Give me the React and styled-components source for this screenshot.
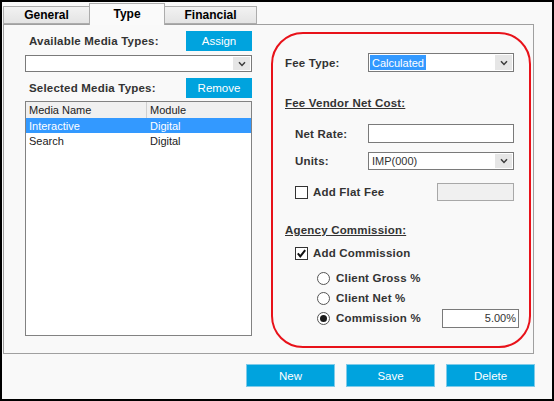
import React from "react";
import styled, { createGlobalStyle } from "styled-components";

const GlobalStyle = createGlobalStyle`
  html, body {
    margin: 0;
    padding: 0;
    background: #fff;
  }
  body {
    font-family: "Liberation Sans", Arial, sans-serif;
  }
  * {
    box-sizing: border-box;
  }
`;

const Frame = styled.div`
  width: 554px;
  height: 401px;
  border: 2px solid #000;
  background: #f9f9f9;
  display: flex;
  flex-direction: column;
`;

const TabBar = styled.div`
  display: flex;
  align-items: flex-end;
  height: 22px;
  padding-left: 1px;
`;

const Tab = styled.div`
  position: relative;
  z-index: ${p => (p.$active ? 1 : 0)};
  width: ${p => p.$w}px;
  height: ${p => (p.$active ? 22 : 18)}px;
  margin-left: ${p => (p.$first ? 0 : -1)}px;
  margin-bottom: ${p => (p.$active ? -1 : 0)}px;
  border: 1px solid #acacac;
  border-bottom: ${p => (p.$active ? "none" : "1px solid #acacac")};
  background: ${p => (p.$active ? "#fafafa" : "linear-gradient(#f2f2f2, #e4e4e4)")};
  display: flex;
  align-items: center;
  justify-content: center;
  padding-bottom: ${p => (p.$active ? 2 : 0)}px;
  font-weight: bold;
  font-size: 12px;
  color: #000;
`;

const Panel = styled.div`
  margin-left: 1px;
  width: 531px;
  height: 330px;
  border: 1px solid #a0a0a0;
  display: flex;
  align-items: flex-start;
  padding: 6px 0 0 21px;
`;

const LeftCol = styled.div`
  width: 227px;
  display: flex;
  flex-direction: column;
`;

const HeaderRow = styled.div`
  display: flex;
  justify-content: space-between;
  align-items: center;
  height: 20px;
  margin-top: ${p => p.$top || 0}px;
`;

const GroupLabel = styled.span`
  padding-left: 4px;
  font-weight: bold;
  font-size: 11.5px;
  letter-spacing: 0.2px;
  color: #333;
`;

const BlueButton = styled.button`
  width: ${p => p.$w}px;
  height: ${p => p.$h}px;
  background: #00a3de;
  border: 1px solid ${p => (p.$outlined ? "#7fcbe9" : "#00a3de")};
  color: #fff;
  font-family: "Liberation Sans", Arial, sans-serif;
  font-size: 11.5px;
  padding: 0;
  cursor: pointer;
`;

const Combo = styled.div`
  display: flex;
  justify-content: space-between;
  align-items: stretch;
  width: ${p => p.$w}px;
  height: ${p => p.$h}px;
  margin-top: ${p => p.$top || 0}px;
  border: 1px solid #7a7a7a;
  background: #fff;
  font-size: 11px;
  color: #333;
`;

const ComboText = styled.span`
  display: flex;
  align-items: center;
  padding: 0 2px;
  margin: 1px;
  background: ${p => (p.$selected ? "#3399ff" : "transparent")};
  color: ${p => (p.$selected ? "#fff" : "#333")};
`;

const DropArrow = styled.span`
  width: 17px;
  margin: 1px;
  background: #e6e6e6;
  display: flex;
  align-items: center;
  justify-content: center;
`;

const ListBox = styled.div`
  margin-top: 3px;
  height: 235px;
  border: 1px solid #828282;
  background: #fff;
`;

const ListRow = styled.div`
  display: grid;
  grid-template-columns: 121px 1fr;
  height: ${p => (p.$header ? 16 : 15)}px;
  background: ${p => (p.$header ? "#f0f0f0" : p.$selected ? "#3399ff" : "#fff")};
  color: ${p => (p.$selected ? "#fff" : "#222")};
  font-size: 11px;
`;

const Cell = styled.div`
  display: flex;
  align-items: center;
  padding-left: 3px;
  border-right: ${p => (p.$divider ? "1px solid #cfcfcf" : "none")};
`;

const FeeBox = styled.div`
  margin: 1px 0 0 19px;
  width: 260px;
  height: 316px;
  border: 2px solid #e8121a;
  border-radius: 32px;
  padding: 19px 15px 0 12px;
  display: flex;
  flex-direction: column;
`;

const FieldRow = styled.div`
  display: flex;
  align-items: center;
  margin-top: ${p => p.$top || 0}px;
`;

const FieldLabel = styled.span`
  width: 83px;
  padding-left: ${p => p.$indent || 0}px;
  font-weight: bold;
  font-size: 11.5px;
  letter-spacing: 0.2px;
  color: #333;
`;

const SectionTitle = styled.div`
  margin-top: ${p => p.$top}px;
  height: 14px;
  line-height: 14px;
  font-weight: bold;
  font-size: 11.5px;
  letter-spacing: 0.2px;
  color: #333;
  text-decoration: underline;
`;

const TextBox = styled.div`
  width: ${p => p.$w}px;
  height: ${p => p.$h}px;
  margin-left: ${p => (p.$push ? "auto" : "0")};
  border: 1px solid #7a7a7a;
  background: ${p => (p.$disabled ? "#f0f0f0" : "#fff")};
  border-color: ${p => (p.$disabled ? "#a8a8a8" : "#7a7a7a")};
  display: flex;
  align-items: center;
  justify-content: flex-end;
  padding-right: 2px;
  font-size: 11px;
  color: #333;
`;

const CheckRow = styled.div`
  display: flex;
  align-items: center;
  height: ${p => p.$h || 14}px;
  margin-top: ${p => p.$top || 0}px;
  margin-right: ${p => p.$overhang || 0}px;
  padding-left: ${p => p.$indent}px;
`;

const CheckBox = styled.span`
  width: 13px;
  height: 13px;
  border: 1px solid #333;
  background: #fff;
  display: flex;
  align-items: center;
  justify-content: center;
  flex-shrink: 0;
`;

const Radio = styled.span`
  width: 13px;
  height: 13px;
  border-radius: 50%;
  border: 1px solid #555;
  background: #fff;
  display: flex;
  align-items: center;
  justify-content: center;
  flex-shrink: 0;

  &::after {
    content: "";
    width: 7px;
    height: 7px;
    border-radius: 50%;
    background: ${p => (p.$checked ? "#1a1a1a" : "transparent")};
  }
`;

const OptionText = styled.span`
  margin-left: ${p => p.$gap}px;
  font-weight: bold;
  font-size: 11.5px;
  letter-spacing: 0.2px;
  color: #333;
`;

const Footer = styled.div`
  display: flex;
  justify-content: flex-end;
  gap: 11px;
  margin-top: 10px;
  padding-right: 17px;
`;

const Chevron = () => (
  <svg width="8" height="6" viewBox="0 0 8 6">
    <path d="M1 1.2 L4 4.4 L7 1.2" fill="none" stroke="#3c3c3c" strokeWidth="1.5" />
  </svg>
);

const Tick = () => (
  <svg width="11" height="11" viewBox="0 0 11 11">
    <path d="M1.8 5.4 L4.3 8.4 L9.2 2.2" fill="none" stroke="#111" strokeWidth="2" />
  </svg>
);

const Select = ({ w, h, top, value, selected }) => (
  <Combo $w={w} $h={h} $top={top}>
    <ComboText $selected={selected}>{value}</ComboText>
    <DropArrow>
      <Chevron />
    </DropArrow>
  </Combo>
);

const mediaRows = [
  { name: "Interactive", module: "Digital", selected: true },
  { name: "Search", module: "Digital" },
];

export default function App() {
  return (
    <>
      <GlobalStyle />
      <Frame>
        <TabBar>
          <Tab $w={87} $first>General</Tab>
          <Tab $w={76} $active>Type</Tab>
          <Tab $w={93}>Financial</Tab>
        </TabBar>

        <Panel>
          <LeftCol>
            <HeaderRow>
              <GroupLabel>Available Media Types:</GroupLabel>
              <BlueButton $w={66} $h={20}>Assign</BlueButton>
            </HeaderRow>
            <Select w={227} h={17} top={4} value="" />
            <HeaderRow $top={6}>
              <GroupLabel>Selected Media Types:</GroupLabel>
              <BlueButton $w={66} $h={20}>Remove</BlueButton>
            </HeaderRow>
            <ListBox>
              <ListRow $header>
                <Cell $divider>Media Name</Cell>
                <Cell>Module</Cell>
              </ListRow>
              {mediaRows.map(r => (
                <ListRow key={r.name} $selected={r.selected}>
                  <Cell>{r.name}</Cell>
                  <Cell>{r.module}</Cell>
                </ListRow>
              ))}
            </ListBox>
          </LeftCol>

          <FeeBox>
            <FieldRow>
              <FieldLabel>Fee Type:</FieldLabel>
              <Select w={146} h={19} value="Calculated" selected />
            </FieldRow>

            <SectionTitle $top={24}>Fee Vendor Net Cost:</SectionTitle>

            <FieldRow $top={14}>
              <FieldLabel $indent={10}>Net Rate:</FieldLabel>
              <TextBox $w={146} $h={19} />
            </FieldRow>
            <FieldRow $top={9}>
              <FieldLabel $indent={10}>Units:</FieldLabel>
              <Select w={146} h={18} value="IMP(000)" />
            </FieldRow>
            <CheckRow $indent={10} $h={18} $top={13}>
              <CheckBox />
              <OptionText $gap={5}>Add Flat Fee</OptionText>
              <TextBox $w={77} $h={18} $push $disabled />
            </CheckRow>

            <SectionTitle $top={22}>Agency Commission:</SectionTitle>

            <CheckRow $indent={10} $top={9}>
              <CheckBox>
                <Tick />
              </CheckBox>
              <OptionText $gap={5}>Add Commission</OptionText>
            </CheckRow>
            <CheckRow $indent={32} $h={20} $top={8}>
              <Radio />
              <OptionText $gap={6}>Client Gross %</OptionText>
            </CheckRow>
            <CheckRow $indent={32} $h={20}>
              <Radio />
              <OptionText $gap={6}>Client Net %</OptionText>
            </CheckRow>
            <CheckRow $indent={32} $h={20} $overhang={-5}>
              <Radio $checked />
              <OptionText $gap={6}>Commission %</OptionText>
              <TextBox $w={77} $h={19} $push>5.00%</TextBox>
            </CheckRow>
          </FeeBox>
        </Panel>

        <Footer>
          <BlueButton $w={89} $h={23} $outlined>New</BlueButton>
          <BlueButton $w={89} $h={23} $outlined>Save</BlueButton>
          <BlueButton $w={89} $h={23} $outlined>Delete</BlueButton>
        </Footer>
      </Frame>
    </>
  );
}
